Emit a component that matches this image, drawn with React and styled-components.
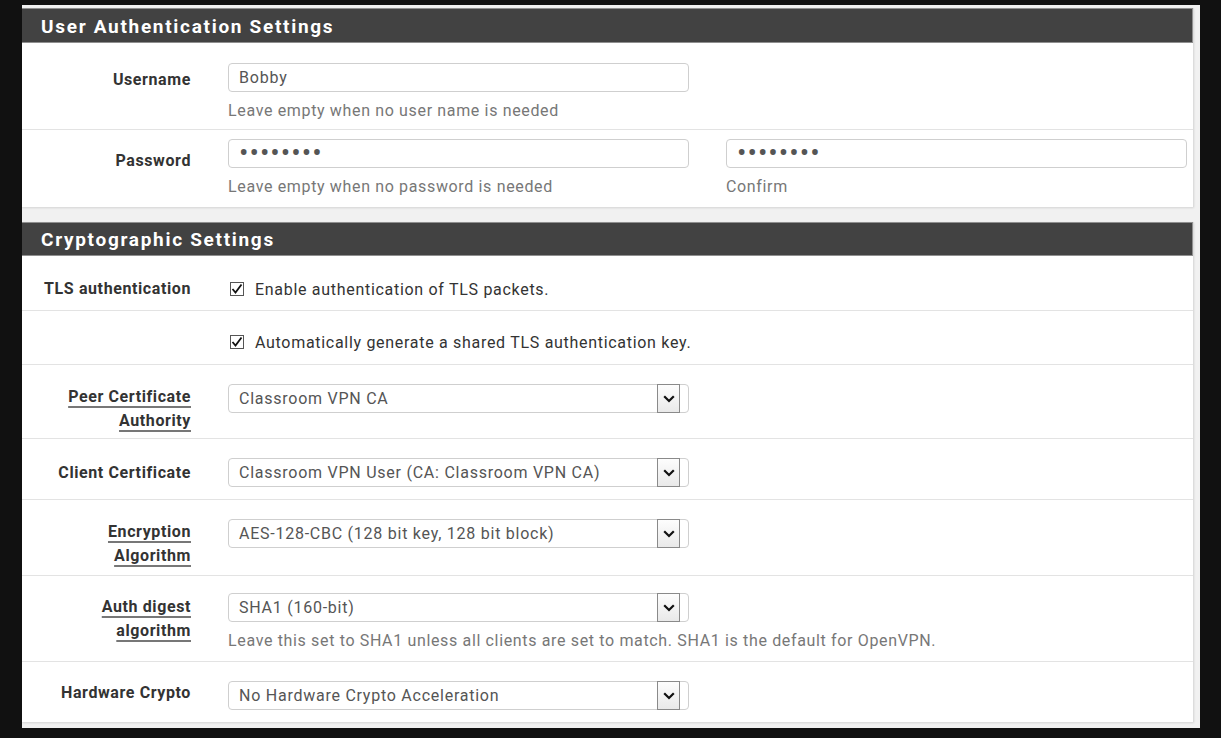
import React from 'react';
import styled, { createGlobalStyle } from 'styled-components';

const GlobalStyle = createGlobalStyle`
	html, body {
		margin: 0;
		padding: 0;
		background: #111;
	}

	body {
		font-family: Roboto, "Liberation Sans", Arial, sans-serif;
	}
`;

const Page = styled.div`
	width: 1221px;
	height: 738px;
	box-sizing: border-box;
	padding: 5px 21px 10px 22px;
	background: #111;
`;

const Sheet = styled.div`
	height: 723px;
	box-sizing: border-box;
	padding: 3px 6px 6px 0;
	background: #f1f1f1;
	display: flex;
	flex-direction: column;
	gap: 15px;
`;

const Panel = styled.section`
	background: #fff;
	border-right: 1px solid #dcdcdc;
	box-shadow: 0 1px 2px rgba(0, 0, 0, 0.12);
	flex: ${({ $grow }) => ($grow ? 1 : 'none')};
`;

const Heading = styled.h2`
	margin: 0;
	height: ${({ $h }) => $h || 35}px;
	line-height: ${({ $h }) => $h || 35}px;
	box-sizing: border-box;
	padding-left: 19px;
	background: #424242;
	border: 1px solid #8f8f8f;
	border-left: none;
	color: #fff;
	font-size: 19px;
	font-weight: 700;
	letter-spacing: 1.7px;
`;

const Row = styled.div`
	display: grid;
	grid-template-columns: 169px 461px 461px;
	column-gap: 37px;
	align-items: start;
	box-sizing: border-box;
	height: ${({ $h }) => $h}px;
	padding-top: ${({ $pt }) => $pt}px;
	border-bottom: ${({ $last }) => ($last ? 'none' : '1px solid #e3e3e3')};
`;

const Label = styled.div`
	text-align: right;
	padding-top: ${({ $pt }) => ($pt === undefined ? 3 : $pt)}px;
	line-height: 24px;
	font-size: 16px;
	font-weight: 700;
	letter-spacing: 0.6px;
	color: #333;
	white-space: nowrap;

	span {
		text-decoration: underline;
		text-decoration-color: #777;
		text-decoration-thickness: 2px;
		text-underline-offset: 4px;
	}
`;

const Field = styled.div`
	display: flex;
	flex-direction: column;
`;

const Input = styled.div`
	height: 29px;
	box-sizing: border-box;
	border: 1px solid #cfcfcf;
	border-radius: 4px;
	padding: 0 10px;
	display: flex;
	align-items: center;
	font-size: 16px;
	letter-spacing: 0.8px;
	color: #555;
`;

const Dots = styled.span`
	font-size: 28px;
	letter-spacing: 1px;
	color: #555;
	line-height: 1;
	transform: translateY(-1px);
`;

const Help = styled.div`
	margin-top: 9px;
	line-height: 19px;
	font-size: 16px;
	letter-spacing: 0.65px;
	color: #777;
	white-space: nowrap;
`;

const Select = styled.div`
	height: 29px;
	box-sizing: border-box;
	border: 1px solid #cfcfcf;
	border-radius: 4px;
	padding-right: 8px;
	display: flex;
	align-items: stretch;
	font-size: 16px;
	letter-spacing: 0.75px;
	color: #555;
`;

const SelectText = styled.div`
	flex: 1;
	display: flex;
	align-items: center;
	padding-left: 10px;
	white-space: nowrap;
`;

const Arrow = styled.div`
	width: 23px;
	box-sizing: border-box;
	margin: -1px 0;
	border: 1px solid #8a8a8a;
	background: linear-gradient(#fdfdfd, #e9e9e9);
	display: flex;
	align-items: center;
	justify-content: center;
`;

const CheckLine = styled.label`
	display: flex;
	align-items: center;
	gap: 11px;
	padding-left: 2px;
	height: 24px;
	font-size: 16px;
	letter-spacing: 0.7px;
	color: #333;
	white-space: nowrap;
`;

const Box = styled.span`
	width: 14px;
	height: 14px;
	box-sizing: border-box;
	border: 1px solid #555;
	background: #fff;
	display: flex;
	align-items: center;
	justify-content: center;
`;

const Chevron = () => (
	<svg width="12" height="8" viewBox="0 0 12 8">
		<polyline points="1.2,1.2 6,6 10.8,1.2" fill="none" stroke="#111" strokeWidth="2.2" />
	</svg>
);

const Check = () => (
	<svg width="12" height="12" viewBox="0 0 12 12">
		<polyline points="1.5,6 4.5,9.5 10.5,1.5" fill="none" stroke="#111" strokeWidth="1.8" />
	</svg>
);

const Dropdown = ({ value }) => (
	<Select>
		<SelectText>{value}</SelectText>
		<Arrow>
			<Chevron />
		</Arrow>
	</Select>
);

const Checkbox = ({ children }) => (
	<CheckLine>
		<Box>
			<Check />
		</Box>
		{children}
	</CheckLine>
);

const App = () => {
	return (
		<Page>
			<GlobalStyle />
			<Sheet>
				<Panel>
					<Heading>User Authentication Settings</Heading>
					<Row $h={87} $pt={20}>
						<Label $pt={5}>Username</Label>
						<Field>
							<Input>Bobby</Input>
							<Help>Leave empty when no user name is needed</Help>
						</Field>
					</Row>
					<Row $h={77} $pt={9} $last>
						<Label $pt={10}>Password</Label>
						<Field>
							<Input>
								<Dots>••••••••</Dots>
							</Input>
							<Help>Leave empty when no password is needed</Help>
						</Field>
						<Field>
							<Input>
								<Dots>••••••••</Dots>
							</Input>
							<Help>Confirm</Help>
						</Field>
					</Row>
				</Panel>

				<Panel $grow>
					<Heading $h={34}>Cryptographic Settings</Heading>
					<Row $h={55} $pt={21}>
						<Label $pt={0}>TLS authentication</Label>
						<Checkbox>Enable authentication of TLS packets.</Checkbox>
					</Row>
					<Row $h={54} $pt={19}>
						<div />
						<Checkbox>Automatically generate a shared TLS authentication key.</Checkbox>
					</Row>
					<Row $h={74} $pt={19}>
						<Label $pt={1}>
							<span>Peer Certificate</span>
							<br />
							<span>Authority</span>
						</Label>
						<Dropdown value="Classroom VPN CA" />
					</Row>
					<Row $h={61} $pt={19}>
						<Label>Client Certificate</Label>
						<Dropdown value="Classroom VPN User (CA: Classroom VPN CA)" />
					</Row>
					<Row $h={76} $pt={19}>
						<Label $pt={1}>
							<span>Encryption</span>
							<br />
							<span>Algorithm</span>
						</Label>
						<Dropdown value="AES-128-CBC (128 bit key, 128 bit block)" />
					</Row>
					<Row $h={86} $pt={17}>
						<Label $pt={2}>
							<span>Auth digest</span>
							<br />
							<span>algorithm</span>
						</Label>
						<Field>
							<Dropdown value="SHA1 (160-bit)" />
							<Help>Leave this set to SHA1 unless all clients are set to match. SHA1 is the default for OpenVPN.</Help>
						</Field>
					</Row>
					<Row $h={59} $pt={19} $last>
						<Label $pt={0}>Hardware Crypto</Label>
						<Dropdown value="No Hardware Crypto Acceleration" />
					</Row>
				</Panel>
			</Sheet>
		</Page>
	);
};

export default App;
